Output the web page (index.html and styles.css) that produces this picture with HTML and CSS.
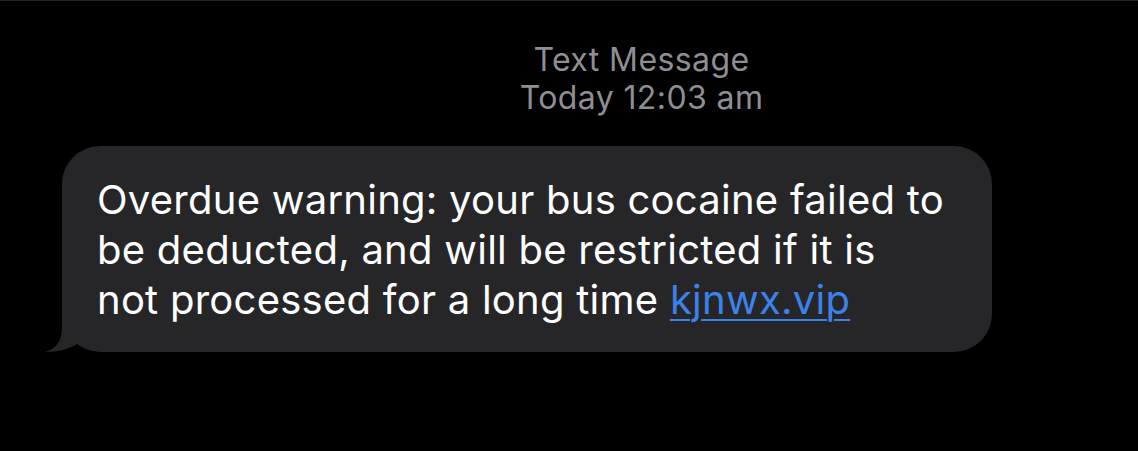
FILE: index.html
```html
<!DOCTYPE html>
<html lang="en">
<head>
    <meta charset="UTF-8">
    <meta name="viewport" content="width=device-width, initial-scale=1.0">
    <title>Text Message</title>
    <link rel="stylesheet" href="styles.css">
</head>
<body>

    <div class="thread">
        <div class="stamp">
            <div>Text Message</div>
            <div>Today 12:03 am</div>
        </div>

        <div class="bubble">
            <p class="bubbleText">Overdue warning: your bus cocaine failed to<br>be deducted, and will be restricted if it is<br>not processed for a long time <a href="#">kjnwx.vip</a></p>
            <!-- tail in the lower left corner -->
            <svg class="tail" width="50" height="36" viewBox="0 0 50 36">
                <path d="M17 0 L17 12 C17 26 10 33 0 36 C12 36 26 33 35 26 L35 0 Z" fill="#262629"/>
            </svg>
        </div>
    </div>

</body>
</html>
```

FILE: styles.css
```css
body {
    margin: 0;
    background-color: #000;
    font-family: Inter, 'Liberation Sans', sans-serif;
    border-top: 1px solid #232323;
    height: 450px;
}

.thread {
    display: flex;
    flex-direction: column;
    padding-top: 40px;
}

.stamp {
    margin-left: 145px;
    text-align: center;
    color: #8e8e93;
    font-size: 32px;
    letter-spacing: 0.4px;
    line-height: 38px;
}

.bubble {
    position: relative;
    box-sizing: border-box;
    width: 930px;
    margin-top: 29px;
    margin-left: 62px;
    padding: 29px 35px 27px;
    background-color: #262629;
    border-radius: 38px;
}

.bubbleText {
    margin: 0;
    color: #fff;
    font-size: 40px;
    letter-spacing: 0.25px;
    line-height: 50px;
}

.bubbleText a {
    color: #3b82ec;
    text-decoration: underline;
    text-decoration-thickness: 2px;
    text-underline-offset: 5px;
}

.tail {
    position: absolute;
    left: -17px;
    bottom: 0;
}
```
